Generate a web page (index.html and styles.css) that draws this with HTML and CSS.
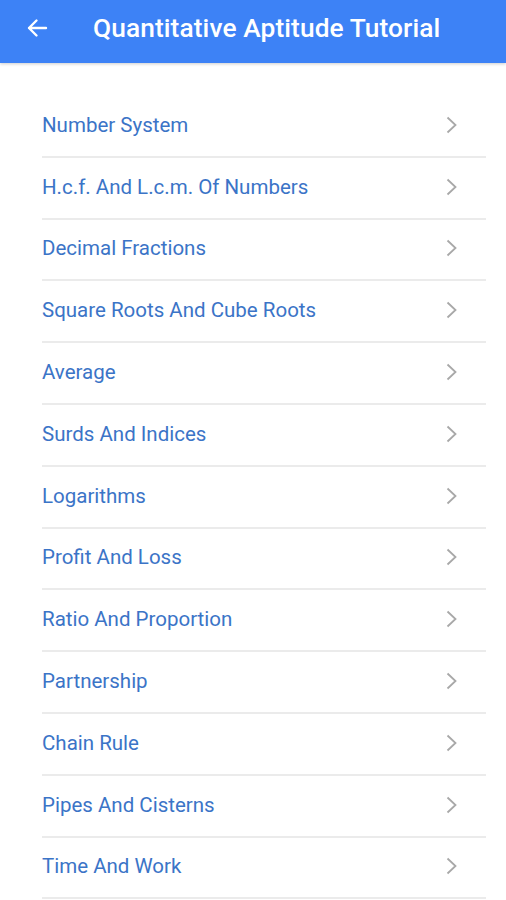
FILE: index.html
```html
<!DOCTYPE html>
<html lang="en">
<head>
  <meta charset="UTF-8" />
  <title>Quantitative Aptitude Tutorial</title>
  <link rel="stylesheet" href="styles.css">
</head>
<body>
  <div class="toolbar">
    <svg class="back" width="24" height="24" viewBox="0 0 24 24"><path d="M21 12H4M11.5 4.5L4 12l7.5 7.5" fill="none" stroke="#fff" stroke-width="2.4" stroke-linecap="round" stroke-linejoin="round"/></svg>
    <h1>Quantitative Aptitude Tutorial</h1>
  </div>

  <ul class="topics">
    <li>Number System</li>
    <li>H.c.f. And L.c.m. Of Numbers</li>
    <li>Decimal Fractions</li>
    <li>Square Roots And Cube Roots</li>
    <li>Average</li>
    <li>Surds And Indices</li>
    <li>Logarithms</li>
    <li>Profit And Loss</li>
    <li>Ratio And Proportion</li>
    <li>Partnership</li>
    <li>Chain Rule</li>
    <li>Pipes And Cisterns</li>
    <li>Time And Work</li>
  </ul>
</body>
</html>
```

FILE: styles.css
```css
body { margin: 0; font-family: Roboto, "Liberation Sans", sans-serif; background: #fff; }
.toolbar {
  height: 63px;
  box-sizing: border-box;
  padding: 0 0 8px 25px;
  background: #3d82f6;
  display: flex;
  align-items: center;
  box-shadow: 0 1px 3px rgba(0,0,0,0.2);
}
.back { flex: none; }
.toolbar h1 {
  margin: 0 0 0 44px;
  color: #fff;
  font-size: 26.3px;
  font-weight: 500;
  letter-spacing: 0.1px;
}
.topics { list-style: none; margin: 33px 20px 0 42px; padding: 0; }
.topics li {
  height: 57.8px;
  padding-bottom: 2px;
  border-bottom: 2px solid #ebebeb;
  display: flex;
  align-items: center;
  justify-content: space-between;
  color: #3b74c7;
  font-size: 20.5px;
}
.topics li::after {
  content: "";
  width: 12px;
  height: 18px;
  margin-right: 28px;
  background: url("data:image/svg+xml,%3Csvg xmlns='http://www.w3.org/2000/svg' width='12' height='18' viewBox='0 0 12 18'%3E%3Cpath d='M1.5 1.5L9.5 9l-8 7.5' fill='none' stroke='%23a8a8a8' stroke-width='1.8'/%3E%3C/svg%3E") no-repeat center;
}
```
